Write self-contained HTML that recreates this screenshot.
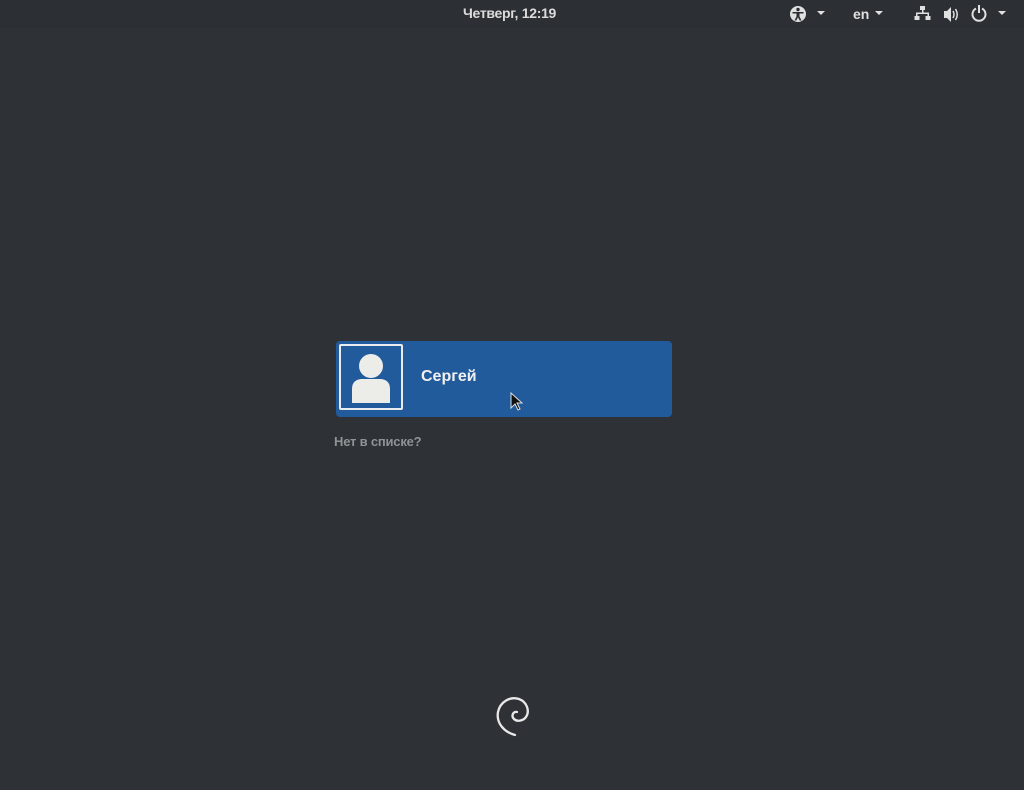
<!DOCTYPE html>
<html><head><meta charset="utf-8"><style>
html,body{margin:0;padding:0}
body{width:1024px;height:790px;background:#2e3135;position:relative;overflow:hidden;font-family:"Liberation Sans","DejaVu Sans",sans-serif}
.t{position:absolute;color:#e6e6e6;font-weight:bold}
</style></head><body>
<div style="position:absolute;left:0;top:0;width:1024px;height:28px;background:#2c2f33"></div>
<div class="t" style="left:463px;top:5px;font-size:14px;color:#dcdcdc;letter-spacing:-0.3px">Четверг, 12:19</div>
<svg style="position:absolute;left:780px;top:0" width="244" height="30" viewBox="0 0 244 30">
 <circle cx="18" cy="14" r="8" fill="#e0e0e0"/>
 <circle cx="18" cy="9.5" r="1.7" fill="#2b2e31"/>
 <path d="M12.5 12h11v1.5h-4v3l2 4h-1.8l-1.7-3.3-1.7 3.3h-1.8l2-4v-3h-4z" fill="#2b2e31"/>
 <path d="M37 11h8l-4 4z" fill="#e0e0e0"/>
 <text x="73" y="19" font-family="Liberation Sans" font-weight="bold" font-size="14" fill="#e0e0e0">en</text>
 <path d="M95 11h8l-4 4z" fill="#e0e0e0"/>
 <g fill="#e0e0e0"><rect x="140" y="6" width="5" height="4"/><rect x="142" y="10" width="1.5" height="3"/><rect x="136" y="12.5" width="13" height="1.5"/><rect x="136" y="12.5" width="1.5" height="4"/><rect x="147.5" y="12.5" width="1.5" height="4"/><rect x="134.5" y="16" width="5" height="4"/><rect x="145.5" y="16" width="5" height="4"/></g>
 <path d="M164 11h3l4-4v15l-4-4h-3z" fill="#e0e0e0"/>
 <path d="M173 11q2 3.5 0 7M175.5 9q3.5 5.5 0 11" stroke="#e0e0e0" stroke-width="1.5" fill="none"/>
 <path d="M196 8.5a6.5 6.5 0 1 0 6 0" stroke="#e0e0e0" stroke-width="2" fill="none"/>
 <rect x="198" y="5" width="2" height="8" fill="#e0e0e0"/>
 <path d="M218 11h8l-4 4z" fill="#e0e0e0"/>
</svg>
<div style="position:absolute;left:336px;top:341px;width:336px;height:76px;background:#215b9b;border-radius:4px"></div>
<div style="position:absolute;left:339px;top:344px;width:60px;height:62px;border:2px solid #e8ecf0;border-radius:2px"></div>
<svg style="position:absolute;left:341px;top:346px" width="60" height="62" viewBox="0 0 60 62">
 <circle cx="30" cy="20" r="12" fill="#ecece8"/>
 <path d="M11 57v-14q0-9 9-10h20q9 1 9 10v14z" fill="#ecece8"/>
</svg>
<div class="t" style="left:421px;top:368px;font-size:16px;color:#f0f0f0">Сергей</div>
<svg style="position:absolute;left:510px;top:392px" width="14" height="22" viewBox="0 0 14 22">
 <path d="M1 1v15l4-4 3 6 2-1-3-6h5z" fill="#111" stroke="#ddd" stroke-width="1"/>
</svg>
<div class="t" style="left:334px;top:434px;font-size:13px;color:#8f9396;letter-spacing:-0.2px">Нет в списке?</div>
<svg style="position:absolute;left:490px;top:690px" width="44" height="50" viewBox="0 0 44 50">
 <path d="M25 45C14 42 6 33 8 22 10 12 20 6 29 9c8 3 11 12 7 18-3 4-9 5-12 2-3-3-1-8 3-7" stroke="#e8e8e8" stroke-width="2.3" fill="none" stroke-linecap="round"/>
</svg>
</body></html>
